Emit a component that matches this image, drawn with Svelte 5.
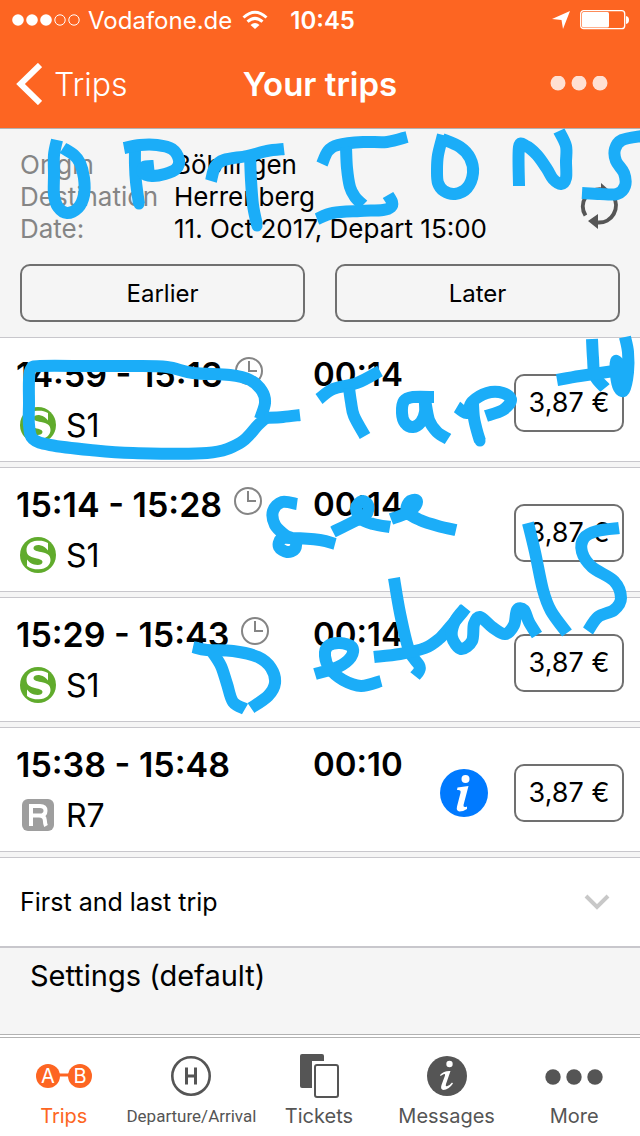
<script>
  const trips = [
    { time: '14:59 - 15:13', length: '00:14', line: 'S1', kind: 'S', clock: true, info: false },
    { time: '15:14 - 15:28', length: '00:14', line: 'S1', kind: 'S', clock: true, info: false },
    { time: '15:29 - 15:43', length: '00:14', line: 'S1', kind: 'S', clock: true, info: false },
    { time: '15:38 - 15:48', length: '00:10', line: 'R7', kind: 'R', clock: false, info: true }
  ];

  // Pen strokes of the handwritten note, as the points each one passes through.
  const strokes = [
    // OPTIONS
    [57,140, 54,155, 54,175, 54,195, 58,207, 67,213, 78,208, 84,195, 84,178, 80,163, 74,155, 63,148],
    [135,148, 135,165, 136,182, 139,204],
    [124,148, 140,145, 157,145, 172,149, 179,160, 176,169, 165,174, 152,176, 143,173, 144,167, 154,166],
    [250,154, 251,180, 253,205, 257,225],
    [211,181, 215,167, 224,160, 247,156, 267,151, 284,149],
    [322,164, 328,151, 338,145, 363,142, 387,142, 407,137],
    [346,147, 347,168, 350,187, 355,197, 363,205],
    [317,219, 333,213, 360,211, 383,210, 391,207, 392,202, 388,195],
    [443,135, 438,155, 437,170, 438,183, 444,191, 455,194, 467,188, 473,173, 470,158, 460,147, 442,139],
    [519,186, 519,147, 526,146, 537,155, 547,169, 553,179, 561,184, 566,178, 566,162, 566,146, 559,131],
    [642,136, 622,140, 615,149, 616,161, 624,173, 625,186, 617,194, 600,194, 582,193],
    // loop round the first trip
    [267,417, 258,425, 240,443, 207,453, 133,453, 90,450, 50,445, 33,439, 29,425, 29,403, 29,380, 31,369, 40,366, 90,366, 133,366, 167,367, 193,373, 230,375, 250,380, 262,391, 265,403, 260,419],
    [265,418, 283,417, 300,415],
    // Tap to
    [319,399, 333,389, 357,383, 380,371],
    [349,388, 351,402, 354,416, 365,436],
    [434,397, 413,397, 404,401, 402,413, 405,423, 413,427, 421,422, 425,412, 425,400, 429,420, 437,432, 448,439],
    [457,407, 467,413, 472,402, 487,393, 503,393, 511,400, 503,410, 486,416],
    [473,404, 474,418, 477,431, 480,441],
    [592,339, 593,358, 595,376, 605,388],
    [557,380, 580,376, 614,371],
    [625,337, 628,352, 628,372, 624,390, 619,388, 616,375, 616,361, 621,370, 621,385],
    // see
    [297,504, 282,502, 273,511, 275,525, 285,535, 295,540, 295,549, 287,552, 279,547, 281,539, 292,538, 320,540, 335,544],
    [333,532, 353,522, 366,515, 368,505, 362,501, 356,508, 361,519, 373,524, 390,527],
    [391,519, 407,513, 416,505, 416,500, 409,502, 407,512, 420,520, 438,526, 456,530],
    // Details
    [193,647, 207,650, 233,651, 258,657, 271,668, 275,683, 268,696, 251,708],
    [213,653, 221,666, 227,684, 233,702, 245,709],
    [315,674, 338,667, 351,657, 352,647, 340,643, 328,646, 325,656, 330,669, 343,680, 361,686, 381,681],
    [394,578, 400,613, 409,650, 419,665, 419,671, 415,676],
    [374,657, 400,654, 425,648, 439,639, 450,627, 466,608],
    [465,608, 455,621, 452,637, 461,649, 472,641, 474,624, 480,617, 492,627, 505,634, 514,625, 517,610, 524,610, 529,622, 537,635],
    [528,523, 535,552, 543,590, 551,611, 567,633],
    [619,528, 597,531, 584,538, 582,552, 592,567, 614,581, 621,598, 614,610, 598,617, 588,631]
  ];

  // Joins the points with a smooth Catmull-Rom curve.
  function smooth(flat) {
    const p = [];
    for (let i = 0; i < flat.length; i += 2) p.push([flat[i], flat[i + 1]]);
    let d = `M${p[0][0]} ${p[0][1]}`;
    for (let i = 0; i < p.length - 1; i++) {
      const a = p[i - 1] ?? p[i];
      const b = p[i];
      const c = p[i + 1];
      const e = p[i + 2] ?? c;
      d += `C${b[0] + (c[0] - a[0]) / 6} ${b[1] + (c[1] - a[1]) / 6} ${c[0] - (e[0] - b[0]) / 6} ${c[1] - (e[1] - b[1]) / 6} ${c[0]} ${c[1]}`;
    }
    return d;
  }
</script>

<div class="screen">
  <header>
    <div class="status">
      <svg width="68" height="12" viewBox="0 0 68 12" aria-hidden="true">
        <g fill="#fff"><circle cx="6" cy="6" r="5.8" /><circle cx="20" cy="6" r="5.8" /><circle cx="34" cy="6" r="5.8" /></g>
        <g fill="none" stroke="#fff"><circle cx="48" cy="6" r="5.2" /><circle cx="62" cy="6" r="5.2" /></g>
      </svg>
      <span class="carrier">Vodafone.de</span>
      <svg class="wifi" width="26" height="20" viewBox="0 0 26 20" aria-hidden="true">
        <g fill="none" stroke="#fff" stroke-width="3"><path d="M1.5 7.5Q13-3 24.5 7.5" /><path d="M5.500 11.700Q13 5 20.500 11.700" /></g>
        <path d="M8.500 15Q13 11 17.500 15L13 19Z" fill="#fff" />
      </svg>
      <span class="clock">10:45</span>
      <svg class="locate" width="18" height="18" viewBox="0 0 18 18" aria-hidden="true"><path d="M18 0L11 18L9.500 9L0 8Z" fill="#fff" /></svg>
      <svg width="50" height="20" viewBox="0 0 50 20" aria-hidden="true">
        <rect x=".7" y=".7" width="44" height="18" rx="3" fill="none" stroke="#fff" stroke-width="1.300" />
        <rect x="2" y="2" width="27" height="15.500" rx="1.500" fill="#fff" />
        <path d="M46 6Q49 6.500 49 10T46 14Z" fill="#fff" />
      </svg>
    </div>
    <nav class="bar">
      <a class="back" href="#trips">
        <svg width="26" height="42" viewBox="0 0 26 42" aria-hidden="true"><path d="M24 2L4.500 21L24 40" fill="none" stroke="#fff" stroke-width="6" /></svg>
        Trips
      </a>
      <h1>Your trips</h1>
      <button class="dots" aria-label="Options">
        <svg width="58" height="16" viewBox="0 0 58 16"><g fill="#ffe0d3"><circle cx="8" cy="7" r="7.500" /><circle cx="29" cy="7" r="7.500" /><circle cx="50" cy="7" r="7.500" /></g></svg>
      </button>
    </nav>
  </header>

  <section class="query">
    <div class="summary">
      <dl>
        <dt>Origin</dt><dd>Böblingen</dd>
        <dt>Destination</dt><dd>Herrenberg</dd>
        <dt>Date:</dt><dd>11. Oct 2017, Depart 15:00</dd>
      </dl>
      <button class="refresh" aria-label="Refresh">
        <svg width="40" height="46" viewBox="0 0 40 46">
          <g fill="none" stroke="#555" stroke-width="4"><path d="M5.500 32.500A17 17 0 0 1 22 6.500" /><path d="M33 13A17 17 0 0 1 18 39.500" /></g>
          <path d="M21 0L30 8L21 14ZM18 31V46L8 38Z" fill="#555" />
        </svg>
      </button>
    </div>
    <div class="shift">
      <button>Earlier</button>
      <button>Later</button>
    </div>
  </section>

  <main>
    {#each trips as trip}
      <article>
        <div class="when">
          <div class="time">
            {trip.time}
            {#if trip.clock}
              <svg width="28" height="28" viewBox="0 0 28 28" aria-hidden="true"><g fill="none" stroke="#858585" stroke-width="2"><circle cx="14" cy="14" r="13" /><path d="M14 4V14H22" /></g></svg>
            {/if}
          </div>
          <div class="line">
            {#if trip.kind === 'S'}
              <svg width="36" height="36" viewBox="0 0 36 36" aria-hidden="true">
                <circle cx="18" cy="18" r="18" fill="#60ab2c" />
                <path d="M28 6C24 3.500 20 3.500 17 3.800C10 4.200 6.500 8 6.500 13C6.500 18 10 20 15 21C20 22 22.500 23 22.500 25C22.500 28 18 28.500 14 27.500C11 26.700 9 25 7 22.500L7 29C10 31.500 15 32.500 19 32.300C26 32 30.500 28 30.500 23C30.500 18 27 16 21 15C16 14 13.500 13.300 13.500 11C13.500 8.500 17 7.700 20 8.200C24 8.800 26 11 28 13.500Z" fill="#fff" />
              </svg>
            {:else}
              <svg width="36" height="36" viewBox="0 0 36 36" aria-hidden="true">
                <rect x="2" y="2" width="32" height="32" rx="6" fill="#9e9e9e" />
                <path d="M11 29V9H20Q25.500 9 25.500 13.800Q25.500 18.600 20 18.600H11M19 18.600Q24.500 18.600 24.800 23Q25 27 26 29" fill="none" stroke="#fff" stroke-width="4" />
              </svg>
            {/if}
            {trip.line}
          </div>
        </div>
        <div class="length">{trip.length}</div>
        <div class="fare">
          {#if trip.info}
            <svg width="48" height="48" viewBox="0 0 48 48" role="img" aria-label="Information">
              <circle cx="24" cy="24" r="24" fill="#007aff" />
              <circle cx="25.500" cy="10" r="4" fill="#fff" />
              <path d="M17.500 18.500L28.500 17L23.500 36Q23 39 27 37.500L27 40Q23 42.500 19.500 42.500Q16 42 17 37.500L20.500 24Q21.500 20.500 17 21Z" fill="#fff" />
            </svg>
          {/if}
          <button>3,87 €</button>
        </div>
      </article>
    {/each}
    <button class="more">
      First and last trip
      <svg width="26" height="18" viewBox="0 0 26 18" aria-hidden="true"><path d="M2 3L13 14L24 3" fill="none" stroke="#c8c8c8" stroke-width="4" /></svg>
    </button>
    <div class="settings">Settings (default)</div>
  </main>

  <nav class="tabs">
    <a class="active" href="#trips">
      <svg width="56" height="44" viewBox="0 0 56 44" aria-hidden="true">
        <path d="M12 21H44" stroke="#fd6522" stroke-width="3" />
        <g fill="#fd6522"><circle cx="12" cy="22" r="12" /><circle cx="44" cy="22" r="12" /></g>
        <g class="badge"><text x="12" y="29">A</text><text x="44" y="29">B</text></g>
      </svg>
      Trips
    </a>
    <a class="long" href="#departures">
      <svg width="44" height="44" viewBox="0 0 44 44" aria-hidden="true">
        <circle cx="22" cy="22" r="18.700" fill="none" stroke="#555" stroke-width="2.600" />
        <path d="M17.500 13.500V30.500M26.500 13.500V30.500M17.500 22H26.500" stroke="#555" stroke-width="3" />
      </svg>
      Departure/Arrival
    </a>
    <a href="#tickets">
      <svg width="44" height="44" viewBox="0 0 44 44" aria-hidden="true">
        <rect x="3" y="0" width="24" height="34" rx="2" fill="#555" />
        <rect x="15" y="7" width="29" height="37" fill="#fff" />
        <rect x="18" y="11" width="23" height="32" rx="2" fill="none" stroke="#555" stroke-width="2" />
      </svg>
      Tickets
    </a>
    <a href="#messages">
      <svg width="44" height="44" viewBox="0 0 44 44" aria-hidden="true">
        <circle cx="22" cy="22" r="20" fill="#555" />
        <circle cx="24.500" cy="10" r="3.200" fill="#fff" />
        <path d="M15 21Q19 16.500 25.500 17L21 30Q20 33 22.500 32Q25 31 27 28.500L28 29.500Q23.500 36 18.500 36Q15 35.500 16.500 31L20 21.500Q20.500 19.500 18.500 20.200L15.500 22Z" fill="#fff" />
      </svg>
      Messages
    </a>
    <a href="#more">
      <svg width="58" height="44" viewBox="0 0 58 44" aria-hidden="true"><g fill="#555"><circle cx="8" cy="23" r="7.700" /><circle cx="29" cy="23" r="7.700" /><circle cx="50" cy="23" r="7.700" /></g></svg>
      More
    </a>
  </nav>

  <svg class="note" viewBox="0 0 640 1136" role="img" aria-label="Options: tap to see details">
    {#each strokes as stroke}
      <path d={smooth(stroke)} />
    {/each}
    <g class="tips"><circle cx="139" cy="204" r="5.500" /><circle cx="257" cy="226" r="5.500" /><circle cx="480" cy="441" r="5.500" /></g>
  </svg>
</div>

<style>
  :global(body) { margin: 0; background: #fff; }
  .screen {
    position: relative;
    display: flex;
    flex-direction: column;
    min-height: 100vh;
    overflow: hidden;
    font-family: Inter, sans-serif;
    font-size: 24px;
    color: #000;
    background: #f5f5f5;
  }
  svg { display: block; flex: none; }
  a { color: inherit; text-decoration: none; }
  button { font: inherit; color: inherit; background: none; border: 0; padding: 0; margin: 0; }

  header { color: #fff; background: #fd6522; border-bottom: 1px solid #b2b2b2; }
  .status { display: flex; align-items: center; height: 40px; padding: 0 12px; }
  .carrier { margin-left: 8px; }
  .wifi { margin-left: 10px; }
  .clock { margin-left: 22px; font-weight: 600; }
  .locate { margin-left: auto; margin-right: 10px; }
  .status svg:last-child { margin-right: -2px; }
  .bar { display: grid; grid-template-columns: 1fr auto 1fr; align-items: center; height: 88px; padding: 0 32px 0 16px; }
  .back { display: flex; align-items: center; gap: 12px; font-size: 32px; font-weight: 300; }
  h1 { margin: 0 -16px 0 0; font-size: 33px; font-weight: 600; }
  .dots { justify-self: end; }

  .query { padding: 20px 20px 15px; }
  .summary { display: flex; justify-content: space-between; align-items: flex-end; }
  dl { display: grid; grid-template-columns: 154px auto; margin: 0; font-size: 26px; line-height: 32px; }
  dt { color: #858585; }
  dd { margin: 0; }
  .refresh { margin-bottom: 16px; }
  .shift { display: grid; grid-template-columns: 1fr 1fr; gap: 30px; margin-top: 19px; }
  .shift button { height: 58px; border: 2px solid #707070; border-radius: 10px; }

  article {
    display: grid;
    grid-template-columns: 297px 1fr auto;
    height: 123px;
    padding: 0 16px;
    margin-bottom: 5px;
    background: #fff;
    border-top: 1px solid #c8c7cc;
    border-bottom: 1px solid #c8c7cc;
  }
  .when { padding-top: 16px; }
  .time { display: flex; align-items: center; gap: 12px; height: 40px; font-size: 34px; font-weight: 600; }
  .time svg { margin-bottom: 6px; }
  .line { display: flex; align-items: center; gap: 10px; height: 40px; margin-top: 11px; padding-left: 4px; font-size: 32px; }
  .length { padding-top: 16px; font-size: 33px; font-weight: 600; line-height: 40px; }
  .fare { display: flex; align-items: center; gap: 26px; padding-top: 6px; }
  .fare button { width: 110px; height: 58px; font-size: 27px; border: 2px solid #707070; border-radius: 10px; }

  .more {
    display: flex;
    align-items: center;
    justify-content: space-between;
    width: 100%;
    height: 91px;
    padding: 0 30px 0 20px;
    font-size: 25px;
    text-align: left;
    background: #fff;
    border-top: 1px solid #c8c7cc;
    border-bottom: 2px solid #c8c7cc;
  }
  .settings { height: 86px; padding-left: 30px; font-size: 29px; line-height: 56px; box-sizing: border-box; }

  .tabs {
    display: grid;
    grid-template-columns: repeat(5, 1fr);
    margin-top: auto;
    padding-right: 2px;
    height: 98px;
    font-size: 20px;
    color: #555;
    background: #fff;
    border-top: 4px double #b2b2b2;
  }
  .tabs a { display: flex; flex-direction: column; align-items: center; gap: 6px; padding-top: 16px; line-height: 24px; white-space: nowrap; min-width: 0; }
  .tabs .active { color: #fd6522; }
  .tabs .long { font-family: Roboto, sans-serif; font-size: 17px; }
  .badge { font-size: 20px; fill: #fff; text-anchor: middle; }

  .note { position: absolute; top: 0; left: 0; width: 100%; pointer-events: none; }
  .note path { fill: none; stroke: #1badf8; stroke-width: 12; stroke-linejoin: round; }
  .tips { fill: #1badf8; }
</style>
